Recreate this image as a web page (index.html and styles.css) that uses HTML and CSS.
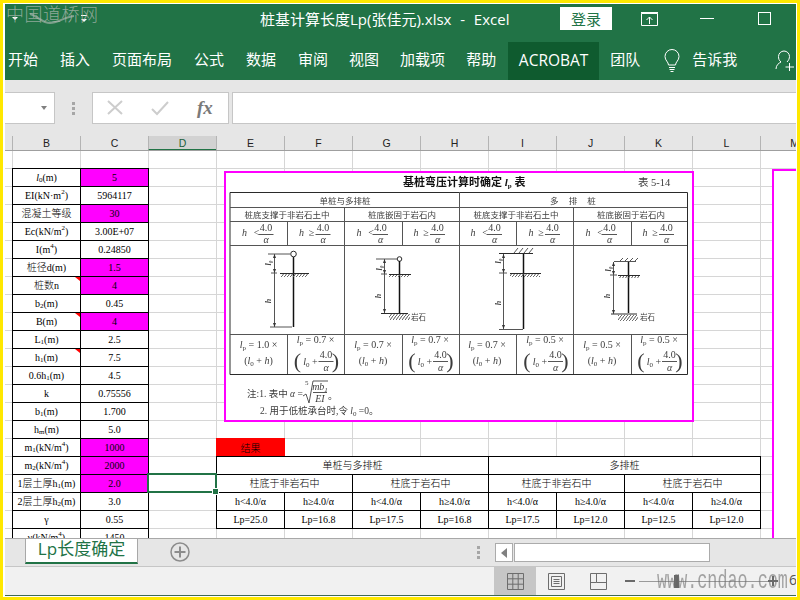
FILE: index.html
```html
<!DOCTYPE html>
<html lang="zh">
<head>
<meta charset="utf-8">
<title>桩基计算长度Lp(张佳元).xlsx - Excel</title>
<link rel="stylesheet" href="styles.css">
</head>
<body>
<div class="window">
  <header class="titlebar">
    <span class="qat qat-first"></span>
    <span class="qat qat-second"></span>
    <span class="doc-title">桩基计算长度Lp(张佳元).xlsx&nbsp; -&nbsp; Excel</span>
    <span class="login">登录</span>
    <svg class="ico ico-display" width="18" height="14" viewBox="0 0 18 14"><path class="st-w" d="M.5 1.5h16v12H.5z"/><path class="st-w" d="M.5 1.5h16M8.5 12V5M5.5 8l3-3 3 3"/><path class="st-w" d="M0 .5h17"/></svg>
    <span class="win-min"></span>
    <span class="win-max"></span>
  </header>
  <nav class="ribbon">
    <span class="tab">开始</span><span class="tab">插入</span><span class="tab">页面布局</span><span class="tab">公式</span><span class="tab">数据</span><span class="tab">审阅</span><span class="tab tab-tight">视图</span><span class="tab tab-tight">加载项</span><span class="tab tab-tight">帮助</span><span class="tab tab-active">ACROBAT</span><span class="tab">团队</span>
    <svg class="ico ico-bulb" width="16" height="24" viewBox="0 0 16 24"><path class="st-w" d="M4.5 16c0-3-3.5-4.500-3.500-8.500a7 7 0 0 1 14 0c0 4-3.500 5.500-3.500 8.500zM5 18.500h6M5.500 20.500h5M6.500 22.500h3"/></svg>
    <span class="tell">告诉我</span>
    <svg class="ico ico-person" width="20" height="22" viewBox="0 0 20 22"><path class="st-w" d="M1 19c0-4 3-6 5-7-2-1.500-2.500-3.500-2.500-5.500C3.500 3.500 6 1 9 1s5.500 2.500 5.500 5.500c0 2-1 4-2.500 5.500M14.500 13v8M10.500 17h8.500"/></svg>
  </nav>

  <section class="formula-bar">
    <div class="name-box"><span class="name-arrow"></span></div>
    <div class="grip"><i></i><i></i><i></i></div>
    <div class="fx-box">
      <svg width="16" height="16" viewBox="0 0 16 16"><path class="st-g" d="M1 1l14 13M15 1L1 14"/></svg>
      <svg width="18" height="16" viewBox="0 0 18 16"><path class="st-g" d="M1 9l5 5L17 2"/></svg>
      <span class="fx">fx</span>
    </div>
    <div class="formula-input"></div>
  </section>

  <div class="col-heads">
    <span class="col-corner"></span>
    <span class="col">B</span><span class="col">C</span><span class="col col-sel">D</span><span class="col">E</span><span class="col">F</span><span class="col">G</span><span class="col">H</span><span class="col">I</span><span class="col">J</span><span class="col">K</span><span class="col">L</span><span class="col">M</span>
  </div>

  <main class="sheet">
    <div class="cells">
      <div class="xtable xtable-params">
        <div class="c"><i>l</i><sub>0</sub>(m)</div><div class="c m">5</div>
        <div class="c">EI(kN·m<sup>2</sup>)</div><div class="c">5964117</div>
        <div class="c">混凝土等级</div><div class="c m">30</div>
        <div class="c">Ec(kN/m<sup>2</sup>)</div><div class="c">3.00E+07</div>
        <div class="c">I(m<sup>4</sup>)</div><div class="c">0.24850</div>
        <div class="c">桩径d(m)</div><div class="c m">1.5</div>
        <div class="c note">桩数n</div><div class="c m">4</div>
        <div class="c">b<sub>2</sub>(m)</div><div class="c">0.45</div>
        <div class="c note">B(m)</div><div class="c m">4</div>
        <div class="c">L<sub>1</sub>(m)</div><div class="c">2.5</div>
        <div class="c note">h<sub>1</sub>(m)</div><div class="c">7.5</div>
        <div class="c">0.6h<sub>1</sub>(m)</div><div class="c">4.5</div>
        <div class="c">k</div><div class="c">0.75556</div>
        <div class="c">b<sub>1</sub>(m)</div><div class="c">1.700</div>
        <div class="c">h<sub>m</sub>(m)</div><div class="c">5.0</div>
        <div class="c">m<sub>1</sub>(kN/m<sup>4</sup>)</div><div class="c m">1000</div>
        <div class="c">m<sub>2</sub>(kN/m<sup>4</sup>)</div><div class="c m">2000</div>
        <div class="c">1层土厚h<sub>1</sub>(m)</div><div class="c m">2.0</div>
        <div class="c">2层土厚h<sub>2</sub>(m)</div><div class="c">3.0</div>
        <div class="c">γ</div><div class="c">0.55</div>
        <div class="c">γ(kN/m<sup>4</sup>)</div><div class="c">1450</div>
      </div>
      <div class="selected-cell"><span class="fill-handle"></span></div>
      <div class="result-label">结果</div>
      <div class="xtable xtable-result">
        <div class="c s4">单桩与多排桩</div><div class="c s4">多排桩</div>
        <div class="c s2">柱底于非岩石中</div><div class="c s2">柱底于岩石中</div><div class="c s2">柱底于非岩石中</div><div class="c s2">柱底于岩石中</div>
        <div class="c">h&lt;4.0/α</div><div class="c">h≥4.0/α</div><div class="c">h&lt;4.0/α</div><div class="c">h≥4.0/α</div><div class="c">h&lt;4.0/α</div><div class="c">h≥4.0/α</div><div class="c">h&lt;4.0/α</div><div class="c">h≥4.0/α</div>
        <div class="c">Lp=25.0</div><div class="c">Lp=16.8</div><div class="c">Lp=17.5</div><div class="c">Lp=16.8</div><div class="c">Lp=17.5</div><div class="c">Lp=12.0</div><div class="c">Lp=12.5</div><div class="c">Lp=12.0</div>
      </div>
    </div>

    <figure class="picture">
      <svg class="scan" width="466" height="247" viewBox="226 173 466 247">
        <defs>
          <pattern id="hatch" width="3" height="4" patternUnits="userSpaceOnUse"><path class="ln" d="M3 0L0 4"/></pattern>
        </defs>
        <text class="t-title" x="403" y="186">基桩弯压计算时确定 <tspan class="it">l</tspan><tspan class="sm" dy="2">p</tspan><tspan dy="-2"> 表</tspan></text>
        <text class="t-tag" x="638" y="186">表 5-14</text>

        <path class="ln-b" d="M230 192.500h457.500v182H230z"/>
        <path class="ln" d="M230 207.500h457M230 221.500h457M230 245.500h457M230 334.500h457"/>
        <path class="ln" d="M344.500 207v167M459.500 192v182M573.500 207v167M287.500 221v24M402.500 221v24M516.500 221v24M631.500 221v24M287.500 334v40M402.500 334v40M516.500 334v40M631.500 334v40"/>

        <text class="t-c" x="345" y="204">单桩与多排桩</text>
        <text class="t-c t-wide" x="573" y="204">多 排 桩</text>
        <text class="t-c" x="287" y="218">桩底支撑于非岩石土中</text>
        <text class="t-c" x="402" y="218">桩底嵌固于岩石内</text>
        <text class="t-c" x="516" y="218">桩底支撑于非岩石土中</text>
        <text class="t-c" x="631" y="218">桩底嵌固于岩石内</text>

        <g transform="translate(258.500 0)"><text class="t-f it" x="-14" y="236">h</text><text class="t-f" x="-2" y="236">&lt;</text><text class="t-f" x="7.500" y="231">4.0</text><path class="ln" d="M0 234.500h15"/><text class="t-f it" x="7.500" y="243">α</text></g>
        <g transform="translate(315.500 0)"><text class="t-f it" x="-14" y="236">h</text><text class="t-f" x="-4" y="236">≥</text><text class="t-f" x="7.500" y="231">4.0</text><path class="ln" d="M0 234.500h15"/><text class="t-f it" x="7.500" y="243">α</text></g>
        <g transform="translate(373 0)"><text class="t-f it" x="-14" y="236">h</text><text class="t-f" x="-2" y="236">&lt;</text><text class="t-f" x="7.500" y="231">4.0</text><path class="ln" d="M0 234.500h15"/><text class="t-f it" x="7.500" y="243">α</text></g>
        <g transform="translate(430 0)"><text class="t-f it" x="-14" y="236">h</text><text class="t-f" x="-4" y="236">≥</text><text class="t-f" x="7.500" y="231">4.0</text><path class="ln" d="M0 234.500h15"/><text class="t-f it" x="7.500" y="243">α</text></g>
        <g transform="translate(487 0)"><text class="t-f it" x="-14" y="236">h</text><text class="t-f" x="-2" y="236">&lt;</text><text class="t-f" x="7.500" y="231">4.0</text><path class="ln" d="M0 234.500h15"/><text class="t-f it" x="7.500" y="243">α</text></g>
        <g transform="translate(545 0)"><text class="t-f it" x="-14" y="236">h</text><text class="t-f" x="-4" y="236">≥</text><text class="t-f" x="7.500" y="231">4.0</text><path class="ln" d="M0 234.500h15"/><text class="t-f it" x="7.500" y="243">α</text></g>
        <g transform="translate(602 0)"><text class="t-f it" x="-14" y="236">h</text><text class="t-f" x="-2" y="236">&lt;</text><text class="t-f" x="7.500" y="231">4.0</text><path class="ln" d="M0 234.500h15"/><text class="t-f it" x="7.500" y="243">α</text></g>
        <g transform="translate(659 0)"><text class="t-f it" x="-14" y="236">h</text><text class="t-f" x="-4" y="236">≥</text><text class="t-f" x="7.500" y="231">4.0</text><path class="ln" d="M0 234.500h15"/><text class="t-f it" x="7.500" y="243">α</text></g>

        <!-- sketch 1 -->
        <circle class="ln-b" cx="293.500" cy="254" r="2.800"/>
        <path class="ln-t" d="M293.500 257v70"/>
        <path class="ln" d="M268 254h22M274.500 254v73M270 327h22M271 273h6"/>
        <path class="ar" d="M274.500 254l-1.500 4h3zM274.500 273l-1.500-4h3zM274.500 327l-1.500-4h3z"/>
        <path class="ln-b" d="M280 273.500h29"/><rect x="281" y="274" width="27" height="3" fill="url(#hatch)"/>
        <text class="t-s it" transform="rotate(-90 271 263)" x="271" y="263">l₀</text><text class="t-s it" transform="rotate(-90 271 301)" x="271" y="301">h</text>
        <!-- sketch 2 -->
        <circle class="ln-b" cx="399.500" cy="259" r="2.300"/>
        <path class="ln-t" d="M399.500 261v52"/>
        <path class="ln" d="M376 259h21M384.500 259v54M381 274h6"/>
        <path class="ar" d="M384.500 259l-1.500 4h3zM384.500 274l-1.500-4h3zM384.500 313l-1.500-4h3z"/>
        <path class="ln-b" d="M389 274.500h22M381 313.500h27"/><rect x="389" y="275" width="21" height="2" fill="url(#hatch)"/><rect x="389" y="314" width="21" height="6" fill="url(#hatch)"/>
        <text class="t-s it" transform="rotate(-90 382 268)" x="382" y="268">l₀</text><text class="t-s it" transform="rotate(-90 381 296)" x="381" y="296">h</text>
        <text class="t-rock" x="411" y="320">岩石</text>
        <!-- sketch 3 -->
        <path class="ln-t" d="M523.500 253v76"/>
        <path class="ln-b" d="M499 253.500h34M510 273.500h31"/>
        <path class="ln" d="M503.500 254v75M499 273h8M499 329.500h24M514 253l4-5M519 253l4-5M524 253l4-5M529 253l4-5"/>
        <path class="ar" d="M503.500 254l-1.500 4h3zM503.500 273l-1.500-4h3zM503.500 329l-1.500-4h3z"/>
        <rect x="510" y="274" width="30" height="3" fill="url(#hatch)"/>
        <text class="t-s it" transform="rotate(-90 501 261)" x="501" y="261">l₀</text><text class="t-s it" transform="rotate(-90 501 303)" x="501" y="303">h</text>
        <!-- sketch 4 -->
        <path class="ln-t" d="M628.500 261v52"/>
        <path class="ln-b" d="M618 275.500h22M611 314h26"/>
        <path class="ln" d="M614 261.500h22M613.500 262v52M610 275h7M620 261l3-3M625 261l3-3M630 261l3-3M635 261l3-3"/>
        <path class="ar" d="M613.500 262l-1.500 4h3zM613.500 275l-1.500-4h3zM613.500 314l-1.500-4h3z"/>
        <rect x="618" y="276" width="21" height="2" fill="url(#hatch)"/><rect x="618" y="315" width="20" height="6" fill="url(#hatch)"/>
        <text class="t-s it" transform="rotate(-90 611 269)" x="611" y="269">l₀</text><text class="t-s it" transform="rotate(-90 610 296)" x="610" y="296">h</text>
        <text class="t-rock" x="640" y="320">岩石</text>

        <g class="formula-a"><text class="t-f" x="258.500" y="348"><tspan class="it">l</tspan><tspan class="sm" dy="2">p</tspan><tspan dy="-2"> = 1.0 ×</tspan></text><text class="t-f" x="258.500" y="364">(<tspan class="it">l</tspan><tspan class="sm" dy="2">0</tspan><tspan dy="-2"> + </tspan><tspan class="it">h</tspan>)</text></g>
        <g class="formula-a"><text class="t-f" x="373" y="348"><tspan class="it">l</tspan><tspan class="sm" dy="2">p</tspan><tspan dy="-2"> = 0.7 ×</tspan></text><text class="t-f" x="373" y="364">(<tspan class="it">l</tspan><tspan class="sm" dy="2">0</tspan><tspan dy="-2"> + </tspan><tspan class="it">h</tspan>)</text></g>
        <g class="formula-a"><text class="t-f" x="487" y="348"><tspan class="it">l</tspan><tspan class="sm" dy="2">p</tspan><tspan dy="-2"> = 0.7 ×</tspan></text><text class="t-f" x="487" y="364">(<tspan class="it">l</tspan><tspan class="sm" dy="2">0</tspan><tspan dy="-2"> + </tspan><tspan class="it">h</tspan>)</text></g>
        <g class="formula-a"><text class="t-f" x="602" y="348"><tspan class="it">l</tspan><tspan class="sm" dy="2">p</tspan><tspan dy="-2"> = 0.5 ×</tspan></text><text class="t-f" x="602" y="364">(<tspan class="it">l</tspan><tspan class="sm" dy="2">0</tspan><tspan dy="-2"> + </tspan><tspan class="it">h</tspan>)</text></g>

        <g transform="translate(315.500 0)"><text class="t-f" x="0" y="343"><tspan class="it">l</tspan><tspan class="sm" dy="2">p</tspan><tspan dy="-2"> = 0.7 ×</tspan></text><text class="t-paren" x="-18" y="368">(</text><text class="t-f" x="-5" y="365"><tspan class="it">l</tspan><tspan class="sm" dy="2">0</tspan><tspan dy="-2"> +</tspan></text><text class="t-f" x="10.500" y="358">4.0</text><path class="ln" d="M3 361.500h15"/><text class="t-f it" x="10.500" y="371">α</text><text class="t-paren" x="20" y="368">)</text></g>
        <g transform="translate(430 0)"><text class="t-f" x="0" y="343"><tspan class="it">l</tspan><tspan class="sm" dy="2">p</tspan><tspan dy="-2"> = 0.7 ×</tspan></text><text class="t-paren" x="-18" y="368">(</text><text class="t-f" x="-5" y="365"><tspan class="it">l</tspan><tspan class="sm" dy="2">0</tspan><tspan dy="-2"> +</tspan></text><text class="t-f" x="10.500" y="358">4.0</text><path class="ln" d="M3 361.500h15"/><text class="t-f it" x="10.500" y="371">α</text><text class="t-paren" x="20" y="368">)</text></g>
        <g transform="translate(545 0)"><text class="t-f" x="0" y="343"><tspan class="it">l</tspan><tspan class="sm" dy="2">p</tspan><tspan dy="-2"> = 0.5 ×</tspan></text><text class="t-paren" x="-18" y="368">(</text><text class="t-f" x="-5" y="365"><tspan class="it">l</tspan><tspan class="sm" dy="2">0</tspan><tspan dy="-2"> +</tspan></text><text class="t-f" x="10.500" y="358">4.0</text><path class="ln" d="M3 361.500h15"/><text class="t-f it" x="10.500" y="371">α</text><text class="t-paren" x="20" y="368">)</text></g>
        <g transform="translate(659 0)"><text class="t-f" x="0" y="343"><tspan class="it">l</tspan><tspan class="sm" dy="2">p</tspan><tspan dy="-2"> = 0.5 ×</tspan></text><text class="t-paren" x="-18" y="368">(</text><text class="t-f" x="-5" y="365"><tspan class="it">l</tspan><tspan class="sm" dy="2">0</tspan><tspan dy="-2"> +</tspan></text><text class="t-f" x="10.500" y="358">4.0</text><path class="ln" d="M3 361.500h15"/><text class="t-f it" x="10.500" y="371">α</text><text class="t-paren" x="20" y="368">)</text></g>

        <text class="t-note" x="247" y="397">注:1. 表中 <tspan class="it">α</tspan> =</text>
        <text class="t-sm" x="305" y="385">5</text>
        <path class="ln" d="M303 396l3-2 3 9 4-22h15"/>
        <text class="t-f it" x="320" y="390">mb<tspan class="sm" dy="2">1</tspan></text>
        <path class="ln" d="M313 392.500h14"/>
        <text class="t-f it" x="320" y="402">EI</text>
        <text class="t-note" x="328" y="399">。</text>
        <text class="t-note" x="260" y="414">2. 用于低桩承台时,令 <tspan class="it">l</tspan><tspan class="sm" dy="2">0</tspan><tspan dy="-2"> =0。</tspan></text>
      </svg>
    </figure>
    <figure class="picture-2"></figure>
  </main>

  <div class="sheet-bar">
    <span class="sheet-stub"></span>
    <span class="sheet-tab">Lp长度确定</span>
    <svg class="add-sheet" width="20" height="20" viewBox="0 0 20 20"><circle class="st-add" cx="10" cy="10" r="9"/><path class="st-plus" d="M10 4.500v11M4.500 10h11"/></svg>
    <div class="grip grip-small"><i></i><i></i><i></i></div>
    <span class="scroll-btn"><span class="scroll-arrow"></span></span>
    <span class="scroll-thumb"></span>
  </div>

  <footer class="statusbar">
    <span class="view view-on">
      <svg width="17" height="17" viewBox="0 0 17 17"><path class="st-v" d="M.5.500h16v16H.500zM.5 5.800h16M.5 11.200h16M5.800.5v16M11.200.5v16"/></svg>
    </span>
    <span class="view">
      <svg width="18" height="17" viewBox="0 0 18 17"><path class="st-v" d="M.5.500h16v16H.500zM3.500 3.500h10v10h-10zM5.500 6.500h6M5.500 8.500h6M5.500 10.500h6"/></svg>
    </span>
    <span class="view">
      <svg width="18" height="17" viewBox="0 0 18 17"><path class="st-v" d="M.5.500h16v16H.500zM.5 9.500h6v-9M6.500 9.500h10"/></svg>
    </span>
    <span class="zoom-minus"></span>
    <span class="zoom-track"><span class="zoom-thumb"></span></span>
    <span class="zoom-plus"></span>
    <span class="zoom-value">6</span>
  </footer>

  <div class="wm-top">中国道桥网
    <svg class="wm-swoosh" width="60" height="14" viewBox="0 0 60 14"><path d="M2 2c8 2 12 9 20 9s14-6 24-7"/></svg>
  </div>
  <div class="wm-bottom">www.cndao.com</div>
</div>
</body>
</html>
```
FILE: styles.css
```css
* { box-sizing: border-box; }
html, body { margin: 0; height: 100%; }
body {
  background: #ffe800;
  font-family: "Noto Sans CJK SC", sans-serif;
  overflow: hidden;
}
svg { display: block; }
.window {
  position: relative;
  width: 794px;
  height: 594px;
  margin: 3px;
  padding: 1px 1px 0 2px;
  background: #fff;
  display: flex;
  flex-direction: column;
  overflow: hidden;
}

/* title bar */
.titlebar {
  height: 38px;
  flex: none;
  background: #217346;
  color: #fff;
  display: flex;
  align-items: center;
  padding-bottom: 9px;
  font-family: "Open Sans", "Noto Sans CJK SC", sans-serif;
  font-size: 15px;
}
.qat {
  width: 0; height: 0;
  border: 3px solid transparent;
  border-top: 3px solid #fff;
  border-bottom: 0;
}
.qat-first { margin-left: 7px; }
.qat-second { margin-left: 63px; margin-top: 3px; position: relative; }
.qat-second::before {
  content: "";
  position: absolute;
  left: -3px; top: -7px;
  width: 6px; height: 1px;
  background: #fff;
}
.doc-title { margin-left: 173px; width: 280px; white-space: nowrap; word-spacing: .5px; }
.login {
  margin-left: 20px;
  width: 52px;
  height: 23px;
  background: #fff;
  color: #217346;
  display: flex;
  align-items: center;
  justify-content: center;
  font-family: "Noto Sans CJK SC", sans-serif;
}
.ico-display { margin-left: 29px; }
.st-w { fill: none; stroke: #fff; stroke-width: 1; }
.win-min { margin-left: 41px; width: 14px; height: 1px; background: #fff; }
.win-max { margin-left: 44px; width: 13px; height: 13px; border: 1px solid #fff; }

/* ribbon tabs */
.ribbon {
  height: 38px;
  flex: none;
  background: #217346;
  color: #fff;
  display: flex;
  align-items: center;
  font-size: 15px;
  overflow: hidden;
}
.tab {
  padding: 0 11px;
  height: 38px;
  line-height: 34px;
  white-space: nowrap;
}
.tab:first-child { margin-left: -8px; }
.tab-tight { margin-left: -1px; }
.tab-active {
  background: #0f5b2f;
  padding: 0;
  margin-left: 1px;
  width: 91px;
  text-align: center;
  font-family: "Open Sans", sans-serif;
  font-size: 15.500px;
  line-height: 36px;
}
.ico-bulb { margin-left: 13px; }
.tell { margin-left: 12px; line-height: 34px; height: 38px; }
.ico-person { margin-left: auto; margin-right: 1px; }

/* formula bar */
.formula-bar {
  height: 56px;
  flex: none;
  background: #e6e6e6;
  padding: 12px 0 12px;
  display: flex;
  align-items: stretch;
}
.name-box {
  width: 50px;
  background: #fff;
  border: 1px solid #c6c6c6;
  border-left: 0;
  position: relative;
}
.name-arrow {
  position: absolute;
  right: 7px; top: 13px;
  border: 3.500px solid transparent;
  border-top: 4px solid #808080;
  border-bottom: 0;
}
.grip {
  display: flex;
  flex-direction: column;
  gap: 2px;
  justify-content: center;
  width: 37px;
  align-items: center;
}
.grip i { width: 3px; height: 3px; background: #a6a6a6; display: block; }
.fx-box {
  width: 137px;
  background: #fff;
  border: 1px solid #c6c6c6;
  display: flex;
  align-items: center;
  padding-left: 14px;
  gap: 28px;
}
.st-g { fill: none; stroke: #cdcdcd; stroke-width: 2; }
.fx {
  font-family: "Liberation Serif", serif;
  font-style: italic;
  font-weight: 700;
  font-size: 19px;
  color: #7a7a7a;
}
.formula-input {
  flex: 1;
  margin-left: 3px;
  background: #fff;
  border: 1px solid #c6c6c6;
  border-right: 0;
}

/* column heads */
.col-heads {
  height: 15px;
  flex: none;
  background: #e6e6e6;
  border-bottom: 1px solid #9f9f9f;
  display: grid;
  grid-template-columns: 7px repeat(12, 68px);
  overflow: hidden;
}
.col {
  border-left: 1px solid #b4b4b4;
  text-align: center;
  font-family: "Liberation Sans", sans-serif;
  font-size: 10.500px;
  line-height: 15px;
  color: #222;
}
.col-sel {
  background: #d2d2d2;
  border-bottom: 2px solid #217346;
  color: #1b5e3a;
  margin-bottom: -1px;
  height: 15px;
}

/* sheet */
.sheet {
  position: relative;
  height: 387px;
  flex: none;
  overflow: hidden;
  background-color: #fff;
  background-image:
    linear-gradient(to right, #d6d6d6 1px, transparent 1px),
    linear-gradient(to bottom, #d6d6d6 1px, transparent 1px);
  background-size: 68px 18px;
  background-position: 7px 0, 0 17px;
}
.cells {
  display: grid;
  grid-template-columns: 7px repeat(12, 68px);
  grid-auto-rows: 18px;
  padding-top: 17px;
  font-family: "Liberation Serif", "Noto Sans CJK SC", serif;
  font-size: 10px;
  font-weight: 300;
  color: #000;
}
.xtable {
  display: grid;
  grid-auto-rows: 18px;
  box-sizing: content-box;
  border-right: 1px solid #000;
  border-bottom: 1px solid #000;
  align-self: start;
  justify-self: start;
  background: #fff;
}
.xtable-params {
  grid-column: 2 / span 2;
  grid-row: 1 / span 21;
  grid-template-columns: repeat(2, 68px);
}
.xtable-result {
  grid-column: 5 / span 8;
  grid-row: 17 / span 4;
  grid-template-columns: repeat(8, 68px);
}
.c {
  position: relative;
  border-left: 1px solid #000;
  border-top: 1px solid #000;
  display: flex;
  align-items: center;
  justify-content: center;
  white-space: pre;
  line-height: 1;
  padding-top: 1px;
}
.c sub, .c sup { font-size: 7px; line-height: 0; vertical-align: baseline; position: relative; }
.c sub { top: 2px; }
.c sup { top: -4px; }
.m { background: #ff00ff; }
.s2 { grid-column: span 2; }
.s4 { grid-column: span 4; }
.note::after {
  content: "";
  position: absolute;
  top: 0; right: 0;
  width: 5px; height: 4px;
  background: #f00;
  clip-path: polygon(0 0, 100% 0, 100% 100%);
}
.selected-cell {
  grid-column: 4;
  grid-row: 18;
  margin: -1px;
  margin-top: -1px;
  border: 2px solid #217346;
  position: relative;
  z-index: 2;
}
.fill-handle {
  position: absolute;
  right: -3px; bottom: -3px;
  width: 5px; height: 5px;
  background: #217346;
  outline: 1px solid #fff;
}
.result-label {
  grid-column: 5;
  grid-row: 16;
  width: 69px;
  background: #f00;
  display: flex;
  align-items: center;
  justify-content: center;
  padding-top: 1px;
}

/* floating pictures on the sheet */
.picture {
  position: absolute;
  left: 219px;
  top: 20px;
  width: 470px;
  height: 251px;
  margin: 0;
  border: 2px solid #ff00ff;
  background: #fff;
}
.picture-2 {
  position: absolute;
  left: 767px;
  top: 18px;
  width: 80px;
  height: 500px;
  margin: 0;
  border: 2px solid #ff00ff;
  background: #fff;
}
.scan { filter: blur(.4px); }
.ln { fill: none; stroke: #555; stroke-width: 1; }
.ln-b { fill: none; stroke: #2a2a2a; stroke-width: 1; }
.ln-t { fill: none; stroke: #111; stroke-width: 1.500; }
.ar { fill: #333; }
.scan text { fill: #3c3c3c; font-family: "Liberation Serif", "Noto Sans CJK SC", serif; }
.it { font-style: italic; }
.sm { font-size: 7px; }
.t-title { font-size: 11px; font-weight: 700; fill: #111 !important; }
.t-tag { font-size: 10.500px; }
.t-c { font-size: 8.500px; text-anchor: middle; }
.t-wide { word-spacing: 8px; }
.t-f { font-size: 10px; text-anchor: middle; }
.t-s { font-size: 8px; font-weight: 700; text-anchor: middle; }
.t-rock { font-size: 7.500px; }
.t-paren { font-size: 22px; font-weight: 300; text-anchor: middle; }
.t-note { font-size: 9.500px; }
.t-sm { font-size: 7px; }

/* sheet tabs + scrollbar */
.sheet-bar {
  height: 29px;
  flex: none;
  background: #e6e6e6;
  border-top: 1px solid #a8a8a8;
  border-bottom: 1px solid #c6c6c6;
  display: flex;
  align-items: flex-start;
}
.sheet-stub { width: 20px; }
.sheet-tab {
  width: 113px;
  height: 25px;
  background: #fff;
  border: 1px solid #a8a8a8;
  border-top: 0;
  border-bottom: 2px solid #217346;
  color: #217346;
  font-family: "Open Sans", "Noto Sans CJK SC", sans-serif;
  font-size: 17px;
  line-height: 20px;
  text-align: center;
  white-space: nowrap;
}
.add-sheet { margin-left: 32px; margin-top: 3px; }
.st-add { fill: none; stroke: #8c8c8c; stroke-width: 1.500; }
.st-plus { fill: none; stroke: #8c8c8c; stroke-width: 2; }
.grip-small { flex: none; width: 3px; height: 13px; margin: 7px 0 0 287px; }
.scroll-btn {
  margin: 4px 0 0 15px;
  width: 18px;
  height: 19px;
  background: #fff;
  border: 1px solid #ababab;
  position: relative;
}
.scroll-arrow {
  position: absolute;
  left: 5px; top: 4px;
  border: 5px solid transparent;
  border-right: 6px solid #808080;
  border-left: 0;
}
.scroll-thumb {
  margin: 4px 0 0 1px;
  width: 196px;
  height: 19px;
  background: #fff;
  border: 1px solid #ababab;
}

/* status bar */
.statusbar {
  height: 29px;
  flex: none;
  background: #f1f1f1;
  border-bottom: 1px solid #3f6a52;
  display: flex;
  align-items: stretch;
  padding-left: 489px;
  position: relative;
  overflow: hidden;
}
.statusbar > * { flex: none; }
.view {
  width: 42px;
  display: flex;
  align-items: center;
  justify-content: center;
}
.view-on { background: #c6c6c6; }
.st-v { fill: none; stroke: #6d6d6d; stroke-width: 1; }
.zoom-minus { width: 10px; height: 2px; background: #6a6a6a; align-self: center; margin-left: 5px; }
.zoom-track {
  width: 129px;
  height: 1px;
  background: #9a9a9a;
  align-self: center;
  margin-left: 4px;
  position: relative;
}
.zoom-thumb {
  position: absolute;
  left: 35px; top: -6px;
  width: 5px; height: 13px;
  background: #666;
}
.zoom-plus {
  width: 10px; height: 10px;
  align-self: center;
  background:
    linear-gradient(#6a6a6a, #6a6a6a) center / 10px 2px no-repeat,
    linear-gradient(#6a6a6a, #6a6a6a) center / 2px 10px no-repeat;
}
.zoom-value {
  margin-left: 11px;
  font-family: "Open Sans", sans-serif;
  font-size: 14px;
  line-height: 26px;
  color: #555;
  white-space: nowrap;
}

/* watermarks over the window */
.wm-top {
  position: absolute;
  left: 3px;
  top: -2px;
  font-family: "Noto Sans CJK SC", sans-serif;
  font-weight: 300;
  font-size: 18px;
  letter-spacing: .5px;
  line-height: 24px;
  white-space: nowrap;
  color: rgba(185, 190, 185, .72);
}
.wm-swoosh { position: absolute; left: 22px; top: 11px; }
.wm-swoosh path { fill: none; stroke: rgba(185, 190, 185, .6); stroke-width: 2; }
.wm-bottom {
  position: absolute;
  left: 654px;
  top: 564px;
  font-family: "Liberation Mono", monospace;
  font-size: 26px;
  line-height: 28px;
  color: rgba(110, 110, 110, .6);
  transform: scaleX(.645);
  transform-origin: left top;
  white-space: nowrap;
}
```
